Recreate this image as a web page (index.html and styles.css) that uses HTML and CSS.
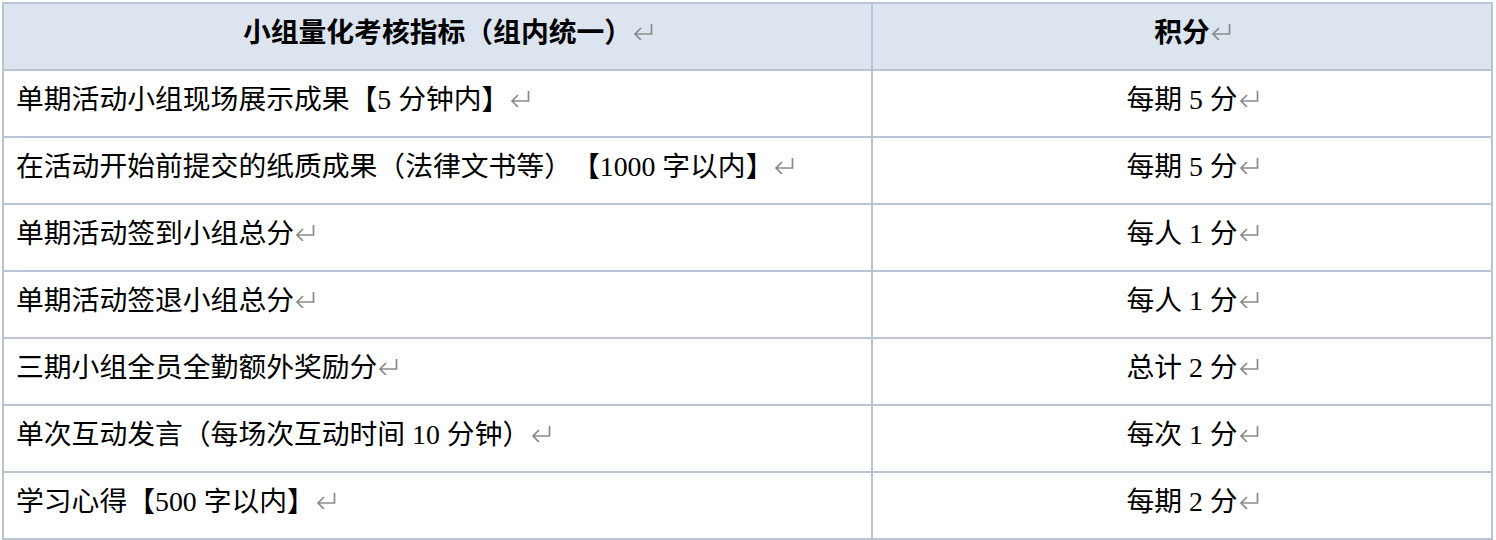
FILE: index.html
```html
<!DOCTYPE html>
<html lang="zh-CN">
<head>
<meta charset="utf-8">
<title>小组量化考核指标</title>
<link rel="stylesheet" href="styles.css">
</head>
<body>
<table class="score-table">
  <colgroup>
    <col class="col-item">
    <col class="col-score">
  </colgroup>
  <thead>
    <tr>
      <th class="cell center"><span class="txt">小组量化考核指标（组内统一）</span><svg class="pm" viewBox="0 0 20 17"><path d="M18.5 1V11H2M8 5L2 11L8 17"/></svg></th>
      <th class="cell center"><span class="txt">积分</span><svg class="pm" viewBox="0 0 20 17"><path d="M18.5 1V11H2M8 5L2 11L8 17"/></svg></th>
    </tr>
  </thead>
  <tbody>
    <tr>
      <td class="cell left"><span class="txt">单期活动小组现场展示成果【5 分钟内】</span><svg class="pm" viewBox="0 0 20 17"><path d="M18.5 1V11H2M8 5L2 11L8 17"/></svg></td>
      <td class="cell center"><span class="txt">每期 5 分</span><svg class="pm" viewBox="0 0 20 17"><path d="M18.5 1V11H2M8 5L2 11L8 17"/></svg></td>
    </tr>
    <tr>
      <td class="cell left"><span class="txt">在活动开始前提交的纸质成果（法律文书等）【1000 字以内】</span><svg class="pm" viewBox="0 0 20 17"><path d="M18.5 1V11H2M8 5L2 11L8 17"/></svg></td>
      <td class="cell center"><span class="txt">每期 5 分</span><svg class="pm" viewBox="0 0 20 17"><path d="M18.5 1V11H2M8 5L2 11L8 17"/></svg></td>
    </tr>
    <tr>
      <td class="cell left"><span class="txt">单期活动签到小组总分</span><svg class="pm" viewBox="0 0 20 17"><path d="M18.5 1V11H2M8 5L2 11L8 17"/></svg></td>
      <td class="cell center"><span class="txt">每人 1 分</span><svg class="pm" viewBox="0 0 20 17"><path d="M18.5 1V11H2M8 5L2 11L8 17"/></svg></td>
    </tr>
    <tr>
      <td class="cell left"><span class="txt">单期活动签退小组总分</span><svg class="pm" viewBox="0 0 20 17"><path d="M18.5 1V11H2M8 5L2 11L8 17"/></svg></td>
      <td class="cell center"><span class="txt">每人 1 分</span><svg class="pm" viewBox="0 0 20 17"><path d="M18.5 1V11H2M8 5L2 11L8 17"/></svg></td>
    </tr>
    <tr>
      <td class="cell left"><span class="txt">三期小组全员全勤额外奖励分</span><svg class="pm" viewBox="0 0 20 17"><path d="M18.5 1V11H2M8 5L2 11L8 17"/></svg></td>
      <td class="cell center"><span class="txt">总计 2 分</span><svg class="pm" viewBox="0 0 20 17"><path d="M18.5 1V11H2M8 5L2 11L8 17"/></svg></td>
    </tr>
    <tr>
      <td class="cell left"><span class="txt">单次互动发言（每场次互动时间 10 分钟）</span><svg class="pm" viewBox="0 0 20 17"><path d="M18.5 1V11H2M8 5L2 11L8 17"/></svg></td>
      <td class="cell center"><span class="txt">每次 1 分</span><svg class="pm" viewBox="0 0 20 17"><path d="M18.5 1V11H2M8 5L2 11L8 17"/></svg></td>
    </tr>
    <tr>
      <td class="cell left"><span class="txt">学习心得【500 字以内】</span><svg class="pm" viewBox="0 0 20 17"><path d="M18.5 1V11H2M8 5L2 11L8 17"/></svg></td>
      <td class="cell center"><span class="txt">每期 2 分</span><svg class="pm" viewBox="0 0 20 17"><path d="M18.5 1V11H2M8 5L2 11L8 17"/></svg></td>
    </tr>
  </tbody>
</table>
</body>
</html>
```
FILE: styles.css
```css
html, body {
  margin: 0;
  padding: 0;
  background: #ffffff;
}

body {
  padding: 2px;
  font-family: "Liberation Serif", "Noto Sans CJK SC", serif;
  color: #000000;
}

.score-table {
  width: 1491px;
  table-layout: fixed;
  border-collapse: separate;
  border-spacing: 0;
  border-top: 2px solid #b9c5d3;
  border-left: 2px solid #b9c5d3;
}

.col-item {
  width: 869px;
}

.col-score {
  width: 620px;
}

.cell {
  box-sizing: border-box;
  height: 67px;
  padding: 0 12px 8px 12px;
  border-right: 2px solid #b9c5d3;
  border-bottom: 2px solid #b9c5d3;
  font-size: 27.8px;
  line-height: 1.2;
  font-weight: 400;
  vertical-align: middle;
  white-space: nowrap;
  text-spacing-trim: space-all;
}

thead .cell {
  background: #dce5ef;
  font-weight: 700;
}

.left {
  text-align: left;
}

.center {
  text-align: center;
  padding-left: 0;
  padding-right: 0;
}

.pm {
  display: inline-block;
  width: 20px;
  height: 17px;
  margin-left: 1px;
  margin-right: -21px;
  vertical-align: 2px;
  fill: none;
  stroke: #8a8a8a;
  stroke-width: 1.7;
}
```
